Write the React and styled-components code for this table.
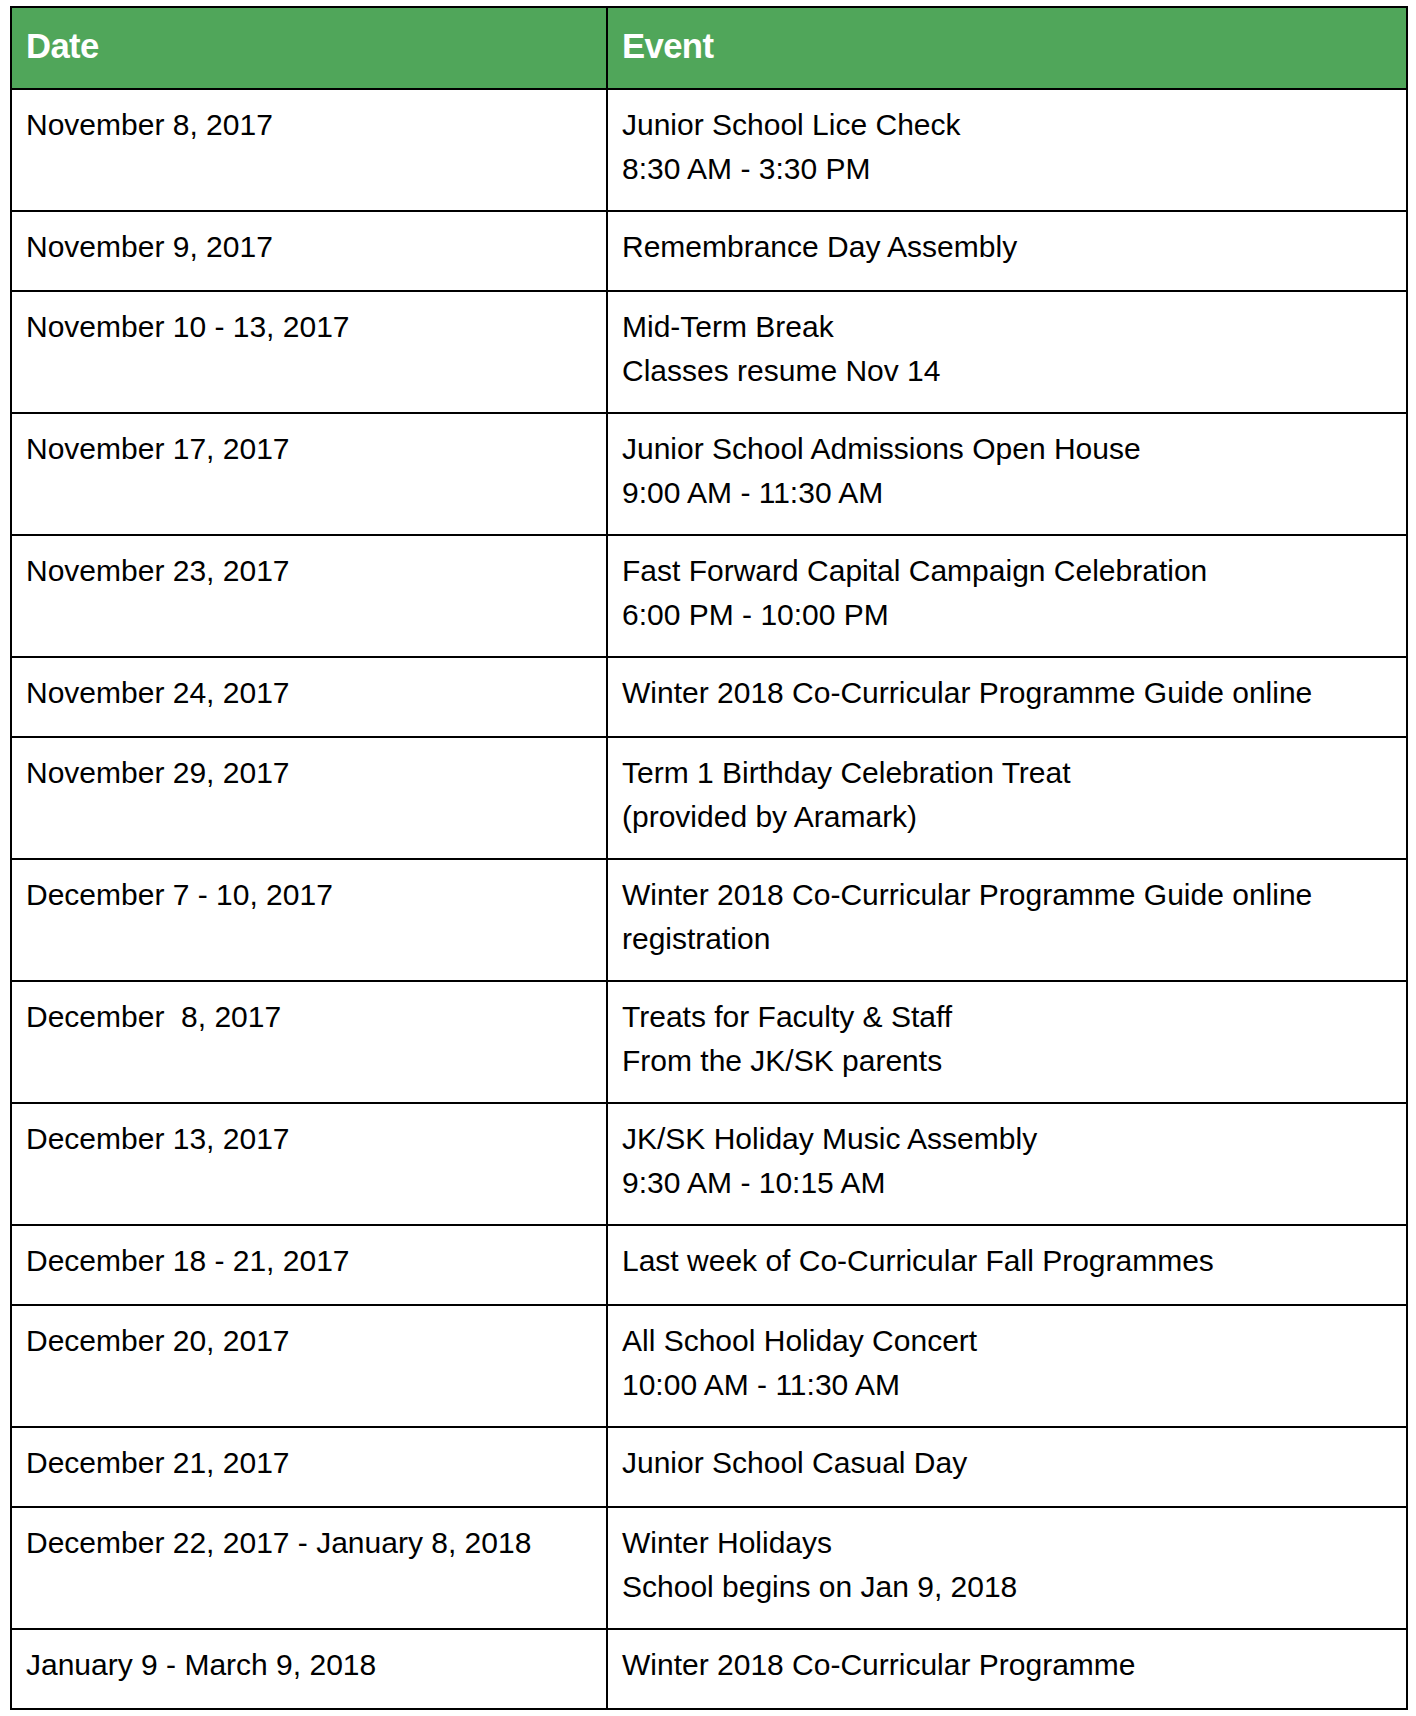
import React from "react";
import styled, { createGlobalStyle } from "styled-components";

const GlobalStyle = createGlobalStyle`
  html, body {
    margin: 0;
    padding: 0;
    background: #ffffff;
  }
  body {
    font-family: "Liberation Sans", Arial, Helvetica, sans-serif;
    color: #000000;
  }
`;

const Page = styled.div`
  padding: 6px 8px 8px 10px;
  width: 1398px;
`;

const Table = styled.table`
  width: 1398px;
  border-collapse: collapse;
  table-layout: fixed;
  border: 2px solid #000;
  font-family: "Liberation Sans", Arial, Helvetica, sans-serif;
  font-size: 30px;
  line-height: 44px;
`;

const HeadCell = styled.th`
  background: #50a65a;
  color: #ffffff;
  font-size: 34.67px;
  font-weight: 700;
  line-height: 43px;
  text-align: left;
  vertical-align: top;
  border: 2px solid #000;
  padding: 17px 13px 20px 14px;
  letter-spacing: -0.6px;
`;

const Cell = styled.td`
  background: #ffffff;
  color: #000000;
  vertical-align: top;
  border: 2px solid #000;
  padding: 13px 13px ${(p) => (p.$single ? "21px" : "19px")} 14px;
  white-space: pre-wrap;
`;

const Line = styled.div`
  display: block;
`;

const rows = [
  ["November 8, 2017", ["Junior School Lice Check", "8:30 AM - 3:30 PM"]],
  ["November 9, 2017", ["Remembrance Day Assembly"]],
  ["November 10 - 13, 2017", ["Mid-Term Break", "Classes resume Nov 14"]],
  ["November 17, 2017", ["Junior School Admissions Open House", "9:00 AM - 11:30 AM"]],
  ["November 23, 2017", ["Fast Forward Capital Campaign Celebration", "6:00 PM - 10:00 PM"]],
  ["November 24, 2017", ["Winter 2018 Co-Curricular Programme Guide online"]],
  ["November 29, 2017", ["Term 1 Birthday Celebration Treat", "(provided by Aramark)"]],
  ["December 7 - 10, 2017", ["Winter 2018 Co-Curricular Programme Guide online", "registration"]],
  ["December  8, 2017", ["Treats for Faculty & Staff", "From the JK/SK parents"]],
  ["December 13, 2017", ["JK/SK Holiday Music Assembly", "9:30 AM - 10:15 AM"]],
  ["December 18 - 21, 2017", ["Last week of Co-Curricular Fall Programmes"]],
  ["December 20, 2017", ["All School Holiday Concert", "10:00 AM - 11:30 AM"]],
  ["December 21, 2017", ["Junior School Casual Day"]],
  ["December 22, 2017 - January 8, 2018", ["Winter Holidays", "School begins on Jan 9, 2018"]],
  ["January 9 - March 9, 2018", ["Winter 2018 Co-Curricular Programme"]],
];

export default function App() {
  return (
    <>
      <GlobalStyle />
      <Page>
        <Table>
          <colgroup>
            <col style={{ width: 596 }} />
            <col />
          </colgroup>
          <thead>
            <tr>
              <HeadCell>Date</HeadCell>
              <HeadCell>Event</HeadCell>
            </tr>
          </thead>
          <tbody>
            {rows.map(([date, lines], i) => {
              const single = lines.length === 1;
              return (
                <tr key={i}>
                  <Cell $single={single}>{date}</Cell>
                  <Cell $single={single}>
                    {lines.map((l, j) => (
                      <Line key={j}>{l}</Line>
                    ))}
                  </Cell>
                </tr>
              );
            })}
          </tbody>
        </Table>
      </Page>
    </>
  );
}
